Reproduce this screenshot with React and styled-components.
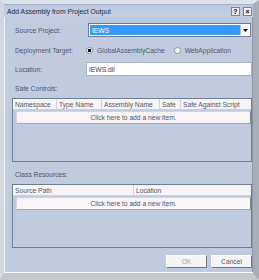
import styled, { createGlobalStyle } from "styled-components";

const GlobalStyle = createGlobalStyle`
  html, body {
    margin: 0;
    padding: 0;
    background: #ffffff;
  }
  * {
    box-sizing: border-box;
  }
`;

const safeColumns = [
  { title: "Namespace", width: 44 },
  { title: "Type Name", width: 45 },
  { title: "Assembly Name", width: 58 },
  { title: "Safe", width: 21 },
  { title: "Safe Against Script" },
];

const resourceColumns = [
  { title: "Source Path", width: 121 },
  { title: "Location" },
];

const Grid = ({ columns }) => (
  <Table>
    <HeaderRow>
      {columns.map((col) => (
        <HeaderCell key={col.title} $width={col.width}>
          {col.title}
        </HeaderCell>
      ))}
    </HeaderRow>
    <NewItemRow>Click here to add a new item.</NewItemRow>
  </Table>
);

const App = () => {
  return (
    <>
      <GlobalStyle />
      <Window>
        <TitleBar>
          <Title>Add Assembly from Project Output</Title>
          <TitleButtons>
            <TitleButton>?</TitleButton>
            <TitleButton>×</TitleButton>
          </TitleButtons>
        </TitleBar>

        <Client>
          <FieldRow>
            <Label>Source Project:</Label>
            <Select>
              <SelectValue>IEWS</SelectValue>
              <SelectArrow>
                <svg width="5" height="3" viewBox="0 0 5 3">
                  <path d="M0 0h5L2.5 3z" fill="#000" />
                </svg>
              </SelectArrow>
            </Select>
          </FieldRow>

          <FieldRow $gap={7}>
            <Label>Deployment Target:</Label>
            <Radios>
              <RadioItem>
                <Radio $checked />
                GlobalAssemblyCache
              </RadioItem>
              <RadioItem>
                <Radio />
                WebApplication
              </RadioItem>
            </Radios>
          </FieldRow>

          <FieldRow $gap={6}>
            <Label>Location:</Label>
            <TextBox>IEWS.dll</TextBox>
          </FieldRow>

          <SectionLabel>Safe Controls:</SectionLabel>
          <Grid columns={safeColumns} />

          <SectionLabel>Class Resources:</SectionLabel>
          <Grid columns={resourceColumns} />

          <Buttons>
            <Button $disabled>OK</Button>
            <Button>Cancel</Button>
          </Buttons>
        </Client>
      </Window>
    </>
  );
};

const Window = styled.div`
  width: 259px;
  height: 280px;
  overflow: hidden;
  display: flex;
  flex-direction: column;
  background: #c0cbe0;
  border-left: 4px solid #d2d6de;
  border-top: 4px solid #dde2ea;
  border-right: 6px solid #a9adb5;
  border-bottom: 7px solid #c4c6cc;
  box-shadow: inset 1px 0 0 #f4f6fa, inset 0 -1px 0 #f4f6fa, inset -1px 0 0 #8e96a6;
  font-family: "Liberation Sans", Arial, sans-serif;
  font-size: 6.7px;
  color: #4f5869;
`;

const TitleBar = styled.div`
  height: 13px;
  display: flex;
  align-items: center;
  justify-content: space-between;
  padding: 0 1px 0 3px;
  background: linear-gradient(#bcc9e0, #c4cfe3);
  border-top: 1px solid #a3b1ca;
`;

const Title = styled.span`
  color: #232b3a;
  font-size: 6.8px;
`;

const TitleButtons = styled.div`
  display: flex;
  gap: 3px;
`;

const TitleButton = styled.div`
  width: 9px;
  height: 9px;
  display: flex;
  align-items: center;
  justify-content: center;
  background: #f2f2f2;
  border: 1px solid #7c8494;
  color: #000;
  font-size: 7px;
  font-weight: bold;
  line-height: 1;
`;

const Client = styled.div`
  flex: 1;
  display: flex;
  flex-direction: column;
  padding: 6px 1px 0 8px;
`;

const FieldRow = styled.div`
  display: grid;
  grid-template-columns: 74px 1fr;
  align-items: center;
  margin-top: ${(p) => (p.$gap ? `${p.$gap}px` : "0")};
`;

const Label = styled.span`
  padding-left: 3px;
  white-space: nowrap;
`;

const Select = styled.div`
  height: 14px;
  margin-left: 2px;
  margin-right: 1px;
  display: flex;
  align-items: stretch;
  border: 1px solid #6e7b90;
  background: #fff;
  padding: 1px;
`;

const SelectValue = styled.div`
  flex: 1;
  display: flex;
  align-items: center;
  padding-left: 2px;
  background: #3399ff;
  color: #fff;
`;

const SelectArrow = styled.div`
  width: 9px;
  display: flex;
  align-items: center;
  justify-content: center;
  background: #f4f4f6;
  border-left: 1px solid #b7bcc6;
`;

const Radios = styled.div`
  display: flex;
  gap: 9px;
  height: 12px;
  align-items: center;
`;

const RadioItem = styled.label`
  display: flex;
  align-items: center;
  gap: 4px;
  white-space: nowrap;
`;

const Radio = styled.span`
  width: 7px;
  height: 7px;
  border-radius: 50%;
  background: ${(p) =>
    p.$checked ? "radial-gradient(circle, #000 0 1.5px, #fff 2px)" : "#fff"};
  border: 1px solid #8a93a3;
`;

const TextBox = styled.div`
  height: 14px;
  display: flex;
  align-items: center;
  padding-left: 2px;
  border: 1px solid #a7b1c2;
  background: #fff;
  color: #3c4350;
`;

const SectionLabel = styled.div`
  margin-top: 8px;
  padding-left: 3px;
  height: 10px;
  line-height: 10px;
`;

const Table = styled.div`
  height: 64px;
  margin-top: 4px;
  display: flex;
  flex-direction: column;
  border: 1px solid #6f7c92;
  background: #c0cbe0;
`;

const HeaderRow = styled.div`
  height: 11px;
  display: flex;
  background: #f7f4f7;
  border-bottom: 1px solid #cfcdd4;
`;

const HeaderCell = styled.div`
  flex: ${(p) => (p.$width ? `0 0 ${p.$width}px` : "1")};
  display: flex;
  align-items: center;
  padding-left: 2px;
  white-space: nowrap;
  overflow: hidden;
  border-right: 1px solid #d4d2d8;

  &:last-child {
    border-right: none;
  }
`;

const NewItemRow = styled.div`
  height: 13px;
  margin: 1px 0 0 3px;
  display: flex;
  align-items: center;
  justify-content: center;
  background: #f8f4f8;
  border: 1px solid #d6d4da;
  border-right-color: #7d8595;
  border-bottom-color: #a0a6b2;
`;

const Buttons = styled.div`
  margin-top: 7px;
  display: flex;
  justify-content: flex-end;
  gap: 4px;
`;

const Button = styled.div`
  width: 41px;
  height: 13px;
  display: flex;
  align-items: center;
  justify-content: center;
  background: #f6f4f6;
  border: 1px solid #fdfdfd;
  border-right-color: #6f7787;
  border-bottom-color: #6f7787;
  color: ${(p) => (p.$disabled ? "#a3a3a8" : "#555a66")};
`;

export default App;
